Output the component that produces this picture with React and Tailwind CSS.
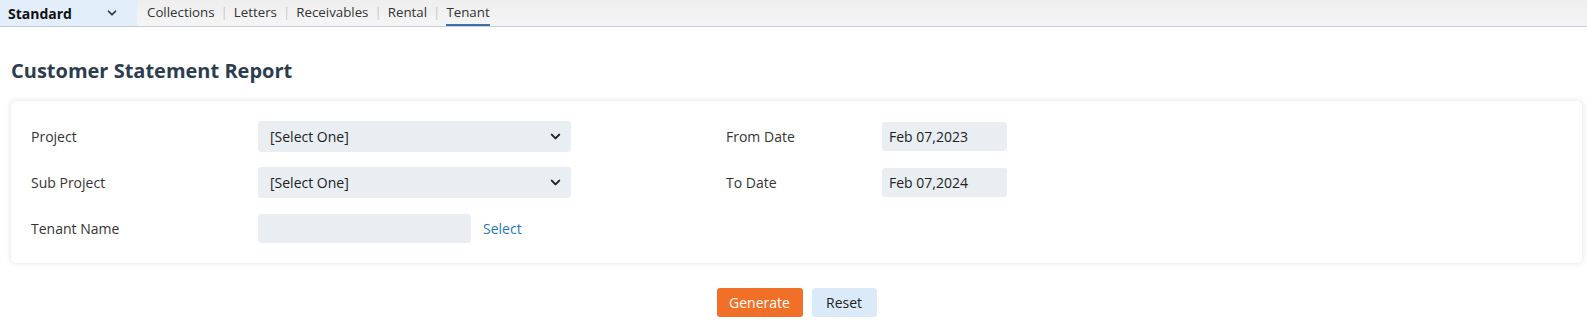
import React from 'react';
import { ChevronDown } from 'lucide-react';

const tabs = ['Collections', 'Letters', 'Receivables', 'Rental', 'Tenant'];

const SelectBox = ({ value }) => (
  <div className="w-[313px] h-[31px] rounded-[3px] bg-[#e9eef3] flex items-center justify-between pl-[12px] pr-[8px] text-[#222]">
    <span>{value}</span>
    <ChevronDown size={15} strokeWidth={3.2} className="text-[#222]" />
  </div>
);

const DateBox = ({ value }) => (
  <div className="w-[125px] h-[29px] rounded-[3px] bg-[#e9eef3] flex items-center pl-[7px] text-[#222]">
    {value}
  </div>
);

const App = () => {
  return (
    <div className="w-[1587px] h-[325px] bg-white text-[14px] text-[#333]" style={{ fontFamily: '"Open Sans", "Noto Sans", sans-serif' }}>
      <div className="h-[27px] flex border-b border-[#c4ccd7] bg-gradient-to-b from-[#eeeeee] to-[#f5f5f5]">
        <div className="w-[137px] bg-[#e2eefa] flex items-center justify-between pl-[8px] pr-[18px]">
          <span className="font-bold text-[#111] text-[14px]">Standard</span>
          <ChevronDown size={14} strokeWidth={3} className="text-[#333]" />
        </div>
        <div className="flex items-stretch pl-[10px] text-[#333] text-[13.3px]">
          {tabs.map((t, i) => (
            <div key={t} className="flex items-stretch">
              {i > 0 && <span className="self-center text-[#c8c8c8] px-[6px]">|</span>}
              <span className={`flex items-center ${t === 'Tenant' ? 'border-b-2 border-[#3f6fa3] pt-[2px]' : ''}`}>{t}</span>
            </div>
          ))}
        </div>
      </div>

      <h1 className="pl-[11px] pt-[30px] pb-[17px] text-[20px] leading-[27px] font-bold text-[#2d3d50]">Customer Statement Report</h1>

      <div className="pl-[11px] pr-[5px]">
        <div className="bg-white rounded-[5px] shadow-[0_0_6px_rgba(0,0,0,0.13)] pt-[20px] pb-[20px] pl-[20px] flex">
          <div className="w-[695px] flex flex-col">
            <div className="flex items-center">
              <span className="w-[227px]">Project</span>
              <SelectBox value="[Select One]" />
            </div>
            <div className="flex items-center mt-[15px]">
              <span className="w-[227px]">Sub Project</span>
              <SelectBox value="[Select One]" />
            </div>
            <div className="flex items-center mt-[16px]">
              <span className="w-[227px]">Tenant Name</span>
              <div className="w-[213px] h-[29px] rounded-[3px] bg-[#e9eef3]" />
              <span className="ml-[12px] text-[#2a77b5]">Select</span>
            </div>
          </div>
          <div className="flex flex-col gap-[17px] pt-[1px]">
            <div className="flex items-center">
              <span className="w-[156px]">From Date</span>
              <DateBox value="Feb 07,2023" />
            </div>
            <div className="flex items-center">
              <span className="w-[156px]">To Date</span>
              <DateBox value="Feb 07,2024" />
            </div>
          </div>
        </div>
      </div>

      <div className="flex justify-center gap-[9px] pt-[25px] pl-[6px]">
        <button className="w-[86px] h-[29px] rounded-[3px] bg-[#f07028] text-white">Generate</button>
        <button className="w-[65px] h-[29px] rounded-[3px] bg-[#dbeaf9] text-[#222]">Reset</button>
      </div>
    </div>
  );
};

export default App;
